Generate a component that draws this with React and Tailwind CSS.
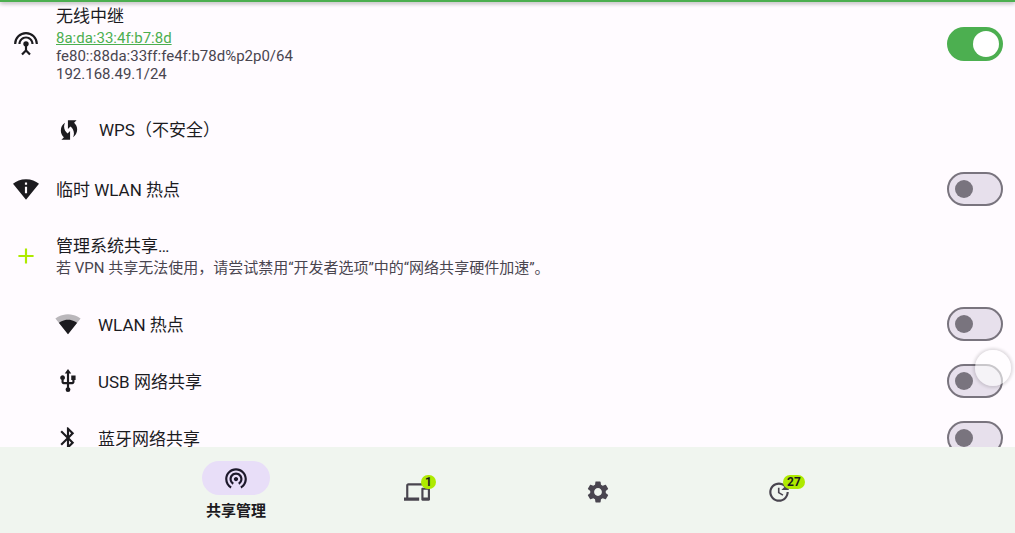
import { useState } from "react"
import {
  MdAdd,
  MdBluetooth,
  MdDevices,
  MdPermScanWifi,
  MdSettings,
  MdSettingsInputAntenna,
  MdUpdate,
  MdUsb,
  MdWifiProtectedSetup,
  MdWifiTethering,
} from "react-icons/md"

const WifiIcon = ({ size }) => (
  <svg width={size} height={size} viewBox="0 0 24 24" fill="currentColor">
    <path
      fillOpacity="0.3"
      d="M12.01 21.49L23.64 7c-.45-.34-4.93-4-11.64-4C5.28 3 .81 6.66.36 7l11.63 14.49.01.01.01-.01z"
    />
    <path d="M3.53 10.95l8.46 10.54.01.01.01-.01 8.46-10.54C20.04 10.62 16.81 8 12 8c-4.81 0-8.04 2.62-8.47 2.95z" />
  </svg>
)

const Switch = ({ id, checked, onChange }) => (
  <input
    id={id}
    type="checkbox"
    role="switch"
    checked={checked}
    onChange={onChange}
    className={`appearance-none shrink-0 flex items-center w-14 h-[34px] rounded-full cursor-pointer before:block before:rounded-full ${
      checked
        ? "justify-end pr-1 bg-[#4caf50] before:size-[26px] before:bg-white"
        : "pl-[6px] border-2 border-[#79747e] bg-[#e7e0ec] before:size-[18px] before:bg-[#79747e]"
    }`}
  />
)

const SwitchRow = ({ id, icon: Icon, title, nested, checked, onToggle }) => (
  <div className={`flex items-center h-[57px] pr-3 ${nested ? "pl-[55px]" : "pl-[13px]"}`}>
    <Icon size={26} />
    <label htmlFor={id} className="flex-1 ml-[17px] pt-[2px] text-[17px] leading-6 cursor-pointer">
      {title}
    </label>
    <Switch id={id} checked={checked} onChange={() => onToggle(id)} />
  </div>
)

const tabs = [
  { id: "tethering", label: "共享管理", icon: MdWifiTethering },
  { id: "clients", label: "设备", icon: MdDevices, badge: 1 },
  { id: "settings", label: "设置", icon: MdSettings },
  { id: "updates", label: "更新", icon: MdUpdate, badge: 27 },
]

const BottomNav = ({ active, onSelect }) => (
  <nav className="shrink-0 flex justify-center h-[86px] pt-1 bg-[#f0f5ef]">
    {tabs.map(({ id, label, icon: Icon, badge }) => (
      <button
        key={id}
        aria-label={label}
        onClick={() => onSelect(id)}
        className="flex-1 max-w-[181px] flex flex-col items-center justify-center gap-1 cursor-pointer"
      >
        <span
          className={`relative flex items-center justify-center w-[68px] h-[34px] rounded-full ${
            active === id ? "bg-[#e8def8] text-[#1d192b]" : "text-[#49454f]"
          }`}
        >
          <Icon size={26} />
          {badge && (
            <span className="absolute left-[38px] top-0 min-w-[14px] h-[14px] px-1 rounded-full bg-[#aeea00] text-[#1c1b1f] text-xs leading-[14px] font-bold text-center">
              {badge}
            </span>
          )}
        </span>
        {active === id && <span className="text-[15px] leading-6 font-bold">{label}</span>}
      </button>
    ))}
  </nav>
)

const App = () => {
  const [tab, setTab] = useState("tethering")
  const [enabled, setEnabled] = useState({ repeater: true })

  const toggle = (id) => setEnabled({ ...enabled, [id]: !enabled[id] })

  return (
    <div className="relative flex flex-col h-screen bg-[#fffbff] text-[#1c1b1f] font-['Roboto','Noto_Sans_CJK_SC',sans-serif]">
      <header className="relative shrink-0 h-[2px] bg-[#4caf50] shadow-[0_1px_4px_rgba(0,0,0,0.5)]" />

      <main className="flex-1 min-h-0 overflow-y-auto [scrollbar-width:none]">
        <div className="flex items-center pl-[13px] pr-3 pt-[2px] pb-[17px]">
          <MdSettingsInputAntenna size={26} />
          <div className="flex-1 ml-[17px]">
            <label htmlFor="repeater" className="block text-[17px] leading-6 cursor-pointer">
              无线中继
            </label>
            <div className="pt-px text-[15px] leading-[18px] text-[#49454f]">
              <a href="#mac" className="text-[#4caf50] underline">
                8a:da:33:4f:b7:8d
              </a>
              <p>fe80::88da:33ff:fe4f:b78d%p2p0/64</p>
              <p>192.168.49.1/24</p>
            </div>
          </div>
          <Switch id="repeater" checked={!!enabled.repeater} onChange={() => toggle("repeater")} />
        </div>

        <button className="flex items-center w-full h-[60px] pl-14 pr-3 text-left cursor-pointer">
          <MdWifiProtectedSetup size={26} />
          <span className="ml-[17px] text-[17px] leading-6">WPS（不安全）</span>
        </button>

        <SwitchRow id="local" icon={MdPermScanWifi} title="临时 WLAN 热点" checked={!!enabled.local} onToggle={toggle} />

        <button className="flex items-center w-full h-[78px] pl-[13px] pr-3 text-left cursor-pointer">
          <MdAdd size={26} className="shrink-0 text-[#aeea00]" />
          <span className="ml-[17px]">
            <span className="block text-[17px] leading-6">管理系统共享…</span>
            <span className="block text-[15px] leading-5 text-[#49454f]">
              若 VPN 共享无法使用，请尝试禁用“开发者选项”中的“网络共享硬件加速”。
            </span>
          </span>
        </button>

        <SwitchRow id="wifi" icon={WifiIcon} title="WLAN 热点" nested checked={!!enabled.wifi} onToggle={toggle} />
        <SwitchRow id="usb" icon={MdUsb} title="USB 网络共享" nested checked={!!enabled.usb} onToggle={toggle} />
        <SwitchRow id="bluetooth" icon={MdBluetooth} title="蓝牙网络共享" nested checked={!!enabled.bluetooth} onToggle={toggle} />
      </main>

      <BottomNav active={tab} onSelect={setTab} />

      {/* floating assist ball */}
      <div className="absolute right-1 top-[350px] size-9 rounded-full bg-white/60 shadow-[0_0_3px_2px_rgba(0,0,0,0.12)] pointer-events-none" />
    </div>
  )
}

export default App
